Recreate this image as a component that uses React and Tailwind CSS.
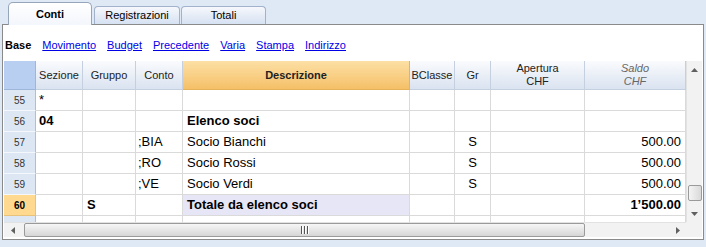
import React from "react";

const cols = "grid grid-cols-[32px_47px_53px_47px_227px_45px_36px_94px_101px]";
const ui = { fontFamily: '"Liberation Sans", Arial, sans-serif' };

const rows = [
  { n: "55", sez: "*", gr: "", conto: "", desc: "", gr2: "", saldo: "" },
  { n: "56", sez: "04", gr: "", conto: "", desc: "Elenco soci", gr2: "", saldo: "", bold: true },
  { n: "57", sez: "", gr: "", conto: ";BIA", desc: "Socio Bianchi", gr2: "S", saldo: "500.00" },
  { n: "58", sez: "", gr: "", conto: ";RO", desc: "Socio Rossi", gr2: "S", saldo: "500.00" },
  { n: "59", sez: "", gr: "", conto: ";VE", desc: "Socio Verdi", gr2: "S", saldo: "500.00" },
  { n: "60", sez: "", gr: "S", conto: "", desc: "Totale da elenco soci", gr2: "", saldo: "1’500.00", bold: true, total: true },
];

function Head({ children, className = "" }) {
  return (
    <div className={`flex flex-col items-center justify-center border-r border-b border-[#c4d0e0] bg-gradient-to-b from-[#fafbfd] to-[#dae3f0] text-[11px] leading-[13px] text-[#222] ${className}`}>
      {children}
    </div>
  );
}

function Cell({ children, className = "" }) {
  return (
    <div className={`flex items-center border-r border-b border-[#dadada] text-[13px] text-black whitespace-nowrap overflow-hidden ${className}`}>
      {children}
    </div>
  );
}

export default function App() {
  return (
    <div className="w-[706px] h-[247px] bg-[#dfe9f5] overflow-hidden" style={ui}>
      {/* tabs */}
      <div className="h-[24px] flex items-end pl-[8px] gap-[1px]">
        <div className="relative z-10 -mb-px w-[84px] h-[23px] rounded-t-[5px] border border-b-0 border-[#97a5ba] bg-gradient-to-b from-white to-[#f3f6fc] flex items-center justify-center text-[11px] font-bold text-black">
          Conti
        </div>
        <div className="w-[86px] h-[18px] ml-[1px] rounded-t-[4px] border border-b-0 border-[#a2b2ca] bg-gradient-to-b from-[#f6f8fc] to-[#d6e1f2] flex items-center justify-center text-[11px] text-black">
          Registrazioni
        </div>
        <div className="w-[85px] h-[18px] rounded-t-[4px] border border-b-0 border-[#a2b2ca] bg-gradient-to-b from-[#f6f8fc] to-[#d6e1f2] flex items-center justify-center text-[11px] text-black">
          Totali
        </div>
      </div>

      {/* panel */}
      <div className="ml-[2px] w-[702px] h-[216px] border border-[#8a8a8a] bg-white">
        <div className="h-[36px] flex items-center gap-[11px] pl-[2px] pt-[4px] text-[11px]">
          <span className="font-bold text-black">Base</span>
          {["Movimento", "Budget", "Precedente", "Varia", "Stampa", "Indirizzo"].map((l) => (
            <span key={l} className="text-[#0000e6] underline">{l}</span>
          ))}
        </div>

        <div className="ml-[1px] flex">
          <div className="w-[682px] h-[161px] overflow-hidden">
            <div className={`${cols} h-[29px]`}>
              <div className="bg-[#b8cff1] border-r border-b border-[#9fb6db]" />
              <Head>Sezione</Head>
              <Head>Gruppo</Head>
              <Head>Conto</Head>
              <Head className="bg-gradient-to-b from-[#fce0a4] to-[#f5c067] border-[#e6b25a] font-bold">Descrizione</Head>
              <Head>BClasse</Head>
              <Head>Gr</Head>
              <Head><span>Apertura</span><span>CHF</span></Head>
              <Head className="italic text-[#666]"><span>Saldo</span><span>CHF</span></Head>
            </div>
            {rows.map((r) => (
              <div key={r.n} className={`${cols} h-[21px]`}>
                <div className={`flex items-center justify-center border-r border-b text-[10px] ${r.total ? "bg-[#ffd98f] border-[#e7c27a] font-bold text-black" : "bg-[#dde7f4] border-r-[#a9bfe0] border-b-[#f4f7fb] text-[#333]"}`}>
                  {r.n}
                </div>
                <Cell className={`pl-[3px] ${r.bold ? "font-bold" : ""}`}>{r.sez}</Cell>
                <Cell className={`pl-[4px] ${r.bold ? "font-bold" : ""}`}>{r.gr}</Cell>
                <Cell className="pl-[2px]">{r.conto}</Cell>
                <Cell className={`pl-[4px] ${r.bold ? "font-bold" : ""} ${r.total ? "bg-[#e7e6f6]" : ""}`}>{r.desc}</Cell>
                <Cell />
                <Cell className="justify-center">{r.gr2}</Cell>
                <Cell />
                <Cell className={`justify-end pr-[4px] ${r.bold ? "font-bold" : ""}`}>{r.saldo}</Cell>
              </div>
            ))}
            <div className={`${cols} h-[6px]`}>
              <div className="bg-[#dde7f4] border-r border-[#a9bfe0]" />
              {Array.from({ length: 8 }).map((_, i) => (
                <div key={i} className="border-r border-[#dadada]" />
              ))}
            </div>
          </div>

          {/* vertical scrollbar */}
          <div className="w-[16px] h-[161px] flex flex-col bg-[#f2f2f2] border-l border-[#e2e2e2]">
            <div className="h-[17px] flex items-center justify-center">
              <svg width="7" height="4" viewBox="0 0 7 4"><path d="M0 4 L3.5 0 L7 4 Z" fill="#606060" /></svg>
            </div>
            <div className="flex-1 flex flex-col justify-end items-center pb-[4px]">
              <div className="w-[14px] h-[16px] rounded-[2px] border border-[#9a9a9a] bg-gradient-to-r from-[#f4f4f4] to-[#d9d9d9]" />
            </div>
            <div className="h-[17px] flex items-center justify-center">
              <svg width="7" height="4" viewBox="0 0 7 4"><path d="M0 0 L3.5 4 L7 0 Z" fill="#606060" /></svg>
            </div>
          </div>
        </div>

        {/* horizontal scrollbar */}
        <div className="ml-[1px] flex">
          <div className="w-[682px] h-[15px] flex items-center bg-[#f2f2f2] border-t border-[#e2e2e2]">
            <div className="w-[17px] flex items-center justify-center">
              <svg width="4" height="7" viewBox="0 0 4 7"><path d="M4 0 L0 3.5 L4 7 Z" fill="#606060" /></svg>
            </div>
            <div className="ml-[3px] w-[561px] h-[14px] rounded-[2px] border border-[#9a9a9a] bg-gradient-to-b from-[#f6f6f6] to-[#d6d6d6] flex items-center justify-center">
              <div className="flex gap-[1px]">
                <div className="w-[2px] h-[8px] bg-[#555] border-r border-white" />
                <div className="w-[2px] h-[8px] bg-[#555] border-r border-white" />
                <div className="w-[2px] h-[8px] bg-[#555] border-r border-white" />
              </div>
            </div>
            <div className="flex-1 flex items-center justify-end pr-[6px]">
              <svg width="4" height="7" viewBox="0 0 4 7"><path d="M0 0 L4 3.5 L0 7 Z" fill="#606060" /></svg>
            </div>
          </div>
          <div className="w-[16px] h-[15px] bg-[#f2f2f2]" />
        </div>
      </div>
    </div>
  );
}
